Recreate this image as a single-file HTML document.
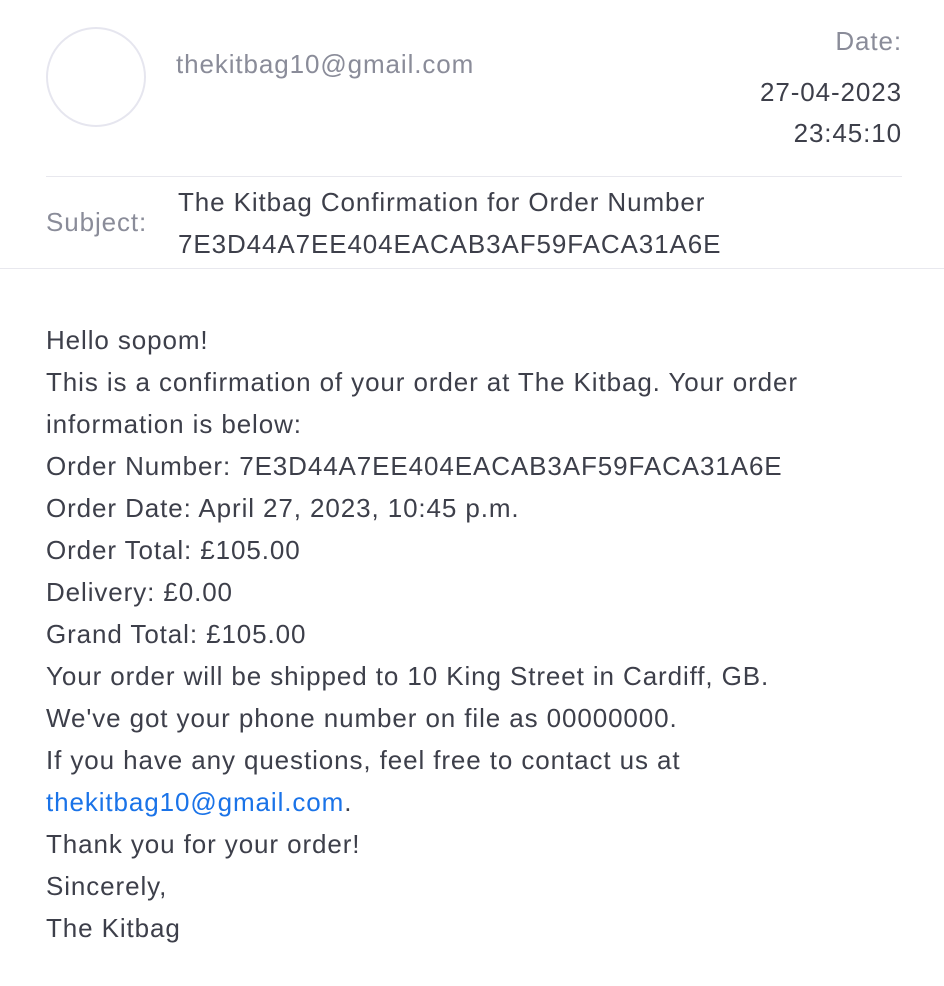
<!DOCTYPE html>
<html><head><style>
body{margin:0;width:944px;height:986px;background:#fff;font-family:"Liberation Sans",sans-serif;position:relative;overflow:hidden}
.a{position:absolute;white-space:nowrap;font-size:26px;letter-spacing:0.9px}
.g{color:#8a8c99}
.t{color:#3d3f4a}
</style></head><body>
<div class="a" style="left:46px;top:27px;width:96px;height:96px;border:2px solid #e6e6ef;border-radius:50%"></div>
<div class="a g" style="left:176px;top:49px">thekitbag10@gmail.com</div>
<div class="a g" style="right:42px;top:26px">Date:</div>
<div class="a t" style="right:42px;top:72px;text-align:right;line-height:41px">27-04-2023<br>23:45:10</div>
<div class="a" style="left:46px;top:176px;width:856px;height:1px;background:#e8e8ee"></div>
<div class="a g" style="left:46px;top:207px">Subject:</div>
<div class="a t" style="left:178px;top:181px;line-height:42px">The Kitbag Confirmation for Order Number<br>7E3D44A7EE404EACAB3AF59FACA31A6E</div>
<div class="a" style="left:0;top:268px;width:944px;height:1px;background:#e8e8ee"></div>
<div class="a t" style="left:46px;top:319px;line-height:42px">Hello sopom!<br>This is a confirmation of your order at The Kitbag. Your order<br>information is below:<br>Order Number: 7E3D44A7EE404EACAB3AF59FACA31A6E<br>Order Date: April 27, 2023, 10:45 p.m.<br>Order Total: £105.00<br>Delivery: £0.00<br>Grand Total: £105.00<br>Your order will be shipped to 10 King Street in Cardiff, GB.<br>We've got your phone number on file as 00000000.<br>If you have any questions, feel free to contact us at<br><span style="color:#1a73e8">thekitbag10@gmail.com</span>.<br>Thank you for your order!<br>Sincerely,<br>The Kitbag</div>
</body></html>
